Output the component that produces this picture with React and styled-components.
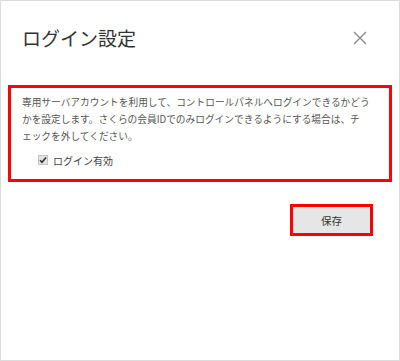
import React from "react";
import styled, { createGlobalStyle } from "styled-components";

const Global = createGlobalStyle`
  html, body { margin: 0; padding: 0; background: #fff; }
  body { font-family: "Noto Sans CJK JP", "Noto Sans", sans-serif; }
`;

const Dialog = styled.div`
  box-sizing: border-box;
  width: 400px;
  height: 361px;
  border: 1px solid #dcdcdc;
  background: #fff;
  display: flex;
  flex-direction: column;
`;

const Header = styled.div`
  display: flex;
  align-items: center;
  justify-content: space-between;
  padding: 27px 32px 0 21px;
  height: 19px;
`;

const Title = styled.h1`
  margin: 0;
  font-size: 19px;
  line-height: 19px;
  font-weight: 400;
  color: #333;
  letter-spacing: 0;
`;

const Close = styled.button`
  border: 0;
  background: none;
  padding: 0;
  width: 14px;
  height: 14px;
  display: flex;
  cursor: pointer;
`;

const Highlight = styled.section`
  margin: 38px 7px 0 7px;
  border: 3px solid #ff0000;
  padding: 6px 10px 11px 11px;
`;

const Description = styled.p`
  margin: 0;
  font-size: 9.7px;
  line-height: 17px;
  color: #555;
`;

const CheckRow = styled.label`
  display: flex;
  align-items: center;
  gap: 5px;
  margin: 7px 0 0 16px;
  height: 16px;
  font-size: 10px;
  color: #444;
`;

const Box = styled.span`
  box-sizing: border-box;
  width: 10px;
  height: 10px;
  background: #e4e4e4;
  border: 1px solid #c4c4c4;
  display: flex;
  align-items: center;
  justify-content: center;
`;

const Actions = styled.div`
  display: flex;
  justify-content: flex-end;
  padding: 22px 26px 0 0;
`;

const SaveButton = styled.button`
  box-sizing: border-box;
  width: 83px;
  height: 32px;
  border: 3px solid #ff0000;
  background: #e6e6e6;
  font-family: "Noto Sans CJK JP", sans-serif;
  font-size: 10.5px;
  color: #333;
  padding: 0;
  cursor: pointer;
`;

export default function App() {
  return (
    <>
      <Global />
      <Dialog>
        <Header>
          <Title>ログイン設定</Title>
          <Close aria-label="閉じる">
            <svg width="14" height="14" viewBox="0 0 14 14">
              <path d="M1 1 L13 13 M13 1 L1 13" stroke="#8a8a8a" strokeWidth="1.4" fill="none" />
            </svg>
          </Close>
        </Header>
        <Highlight>
          <Description>
            専用サーバアカウントを利用して、コントロールパネルへログインできるかどう
            <br />
            かを設定します。さくらの会員IDでのみログインできるようにする場合は、チ
            <br />
            ェックを外してください。
          </Description>
          <CheckRow>
            <Box>
              <svg width="8" height="8" viewBox="0 0 8 8">
                <path d="M1 4.2 L3 6.3 L7 1.5" stroke="#333" strokeWidth="1.6" fill="none" />
              </svg>
            </Box>
            ログイン有効
          </CheckRow>
        </Highlight>
        <Actions>
          <SaveButton>保存</SaveButton>
        </Actions>
      </Dialog>
    </>
  );
}
